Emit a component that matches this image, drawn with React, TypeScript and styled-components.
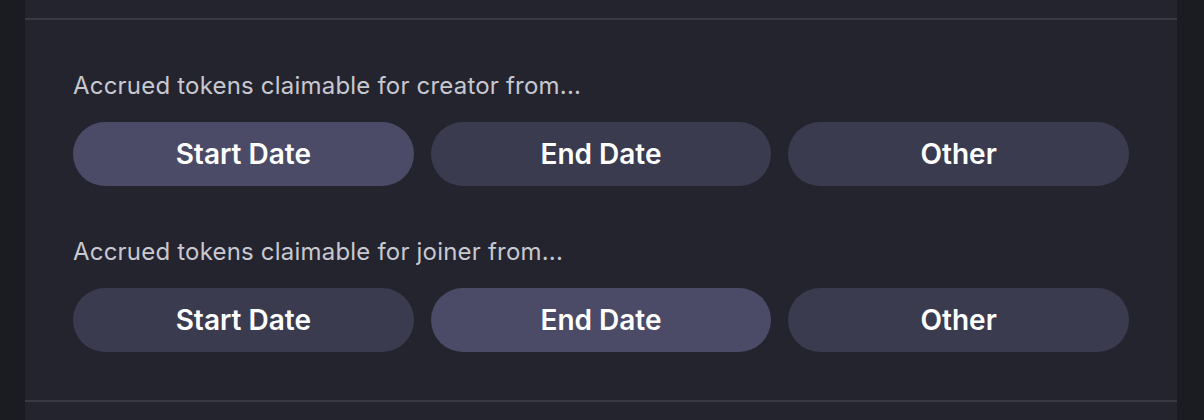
import React, { useState } from "react";
import styled, { createGlobalStyle } from "styled-components";

const Global = createGlobalStyle`
  html, body { margin: 0; padding: 0; background: #1b1b22; }
  body { font-family: Inter, "Noto Sans", sans-serif; }
  * { box-sizing: border-box; }
`;

const Page = styled.div`
  height: 420px;
  padding: 0 27px 0 25px;
  background: #1b1b22;
`;

const Panel = styled.div`
  height: 100%;
  background: #24242f;
  display: flex;
  flex-direction: column;
`;

const TopStub = styled.div`
  height: 20px;
  border-bottom: 2px solid #393945;
`;

const Section = styled.div`
  padding: 51px 48px 48px 48px;
  display: flex;
  flex-direction: column;
  gap: 51px;
  border-bottom: 2px solid #393945;
`;

const Group = styled.div`
  display: flex;
  flex-direction: column;
  gap: 22px;
`;

const Label = styled.div`
  color: #c8c8d0;
  font-size: 24px;
  line-height: 29px;
  letter-spacing: 0.2px;
`;

const Options = styled.div`
  display: grid;
  grid-template-columns: repeat(3, 1fr);
  gap: 17px;
`;

const Option = styled.button<{ $active: boolean }>`
  height: 64px;
  border: none;
  border-radius: 32px;
  background: ${(p) => (p.$active ? "#4b4b67" : "#3b3b50")};
  color: #ffffff;
  font-family: Inter, "Noto Sans", sans-serif;
  font-size: 28px;
  font-weight: 600;
  cursor: pointer;
`;

const choices = ["Start Date", "End Date", "Other"];

function Chooser({ label, initial }: { label: string; initial: number }) {
  const [sel, setSel] = useState(initial);
  return (
    <Group>
      <Label>{label}</Label>
      <Options>
        {choices.map((c, i) => (
          <Option key={c} $active={i === sel} onClick={() => setSel(i)}>
            {c}
          </Option>
        ))}
      </Options>
    </Group>
  );
}

export default function App() {
  return (
    <>
      <Global />
      <Page>
        <Panel>
          <TopStub />
          <Section>
            <Chooser label="Accrued tokens claimable for creator from..." initial={0} />
            <Chooser label="Accrued tokens claimable for joiner from..." initial={1} />
          </Section>
        </Panel>
      </Page>
    </>
  );
}
